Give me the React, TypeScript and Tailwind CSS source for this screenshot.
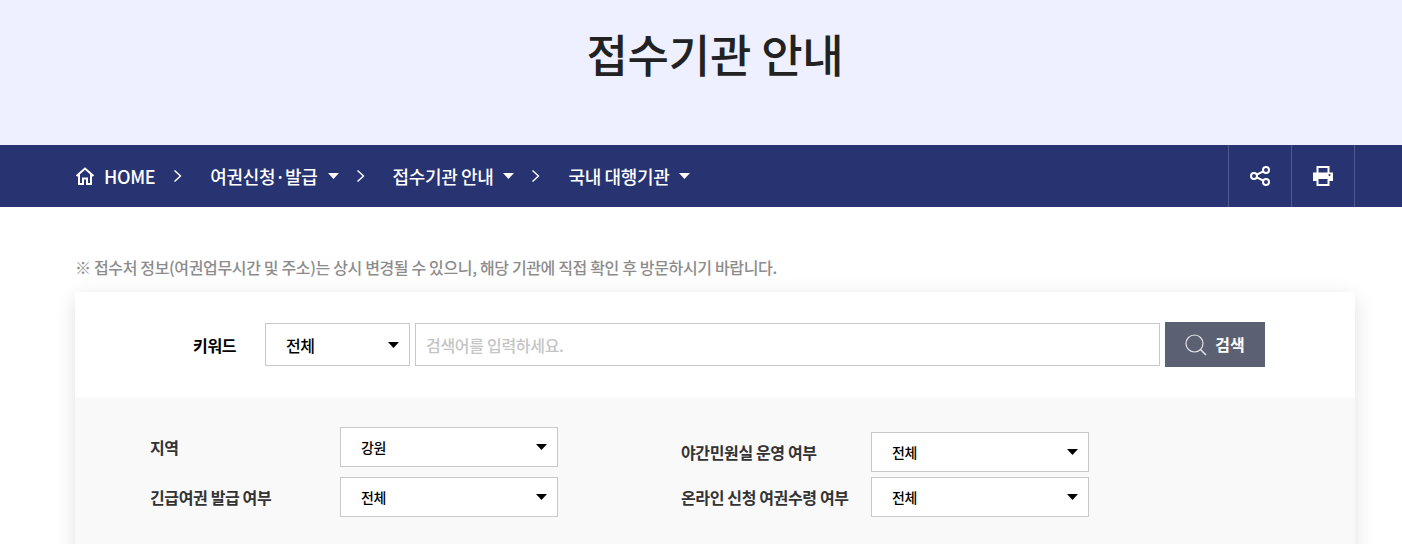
import React from "react";

const font = { fontFamily: '"Noto Sans CJK KR", "Noto Sans", sans-serif' };

function Caret({ className = "" }: { className?: string }) {
  return (
    <svg width="11" height="6" viewBox="0 0 11 6" className={className}>
      <path d="M0 0H11L5.5 6Z" fill="currentColor" />
    </svg>
  );
}

function Chevron() {
  return (
    <svg width="9" height="14" viewBox="0 0 9 14" fill="none" stroke="white" strokeWidth="1.4" className="shrink-0">
      <path d="M1.5 1.5L7.5 7L1.5 12.5" />
    </svg>
  );
}

function Select({ value, className }: { value: string; className: string }) {
  return (
    <div className={`flex items-center justify-between border border-[#c8c8c8] bg-white pl-[20px] pr-[10px] text-black font-medium ${className}`}>
      <span>{value}</span>
      <Caret />
    </div>
  );
}

function Field({ label, value }: { label: string; value: string }) {
  return (
    <div className="flex items-center">
      <span className="w-[190px] text-[16px] font-semibold text-[#333] tracking-[-0.37px]">{label}</span>
      <Select value={value} className="w-[218px] h-[40px] text-[14px] tracking-[-0.5px]" />
    </div>
  );
}

export default function App() {
  return (
    <div className="h-[544px] overflow-hidden bg-white" style={font}>
      <div className="w-[1430px]">
        <div className="h-[145px] bg-[#eef0ff] pt-[21px] text-center text-[45px] leading-[65px] font-medium text-[#222] tracking-[-0.2px]">
          접수기관 안내
        </div>

        <nav className="h-[62px] bg-[#283371] text-white">
          <div className="mx-auto flex h-full w-[1280px] items-center justify-between">
            <div className="flex items-center text-[18px] font-medium tracking-[-0.35px]">
              <svg width="20" height="20" viewBox="0 0 20 20" fill="none" stroke="white" strokeWidth="2" className="mr-[9px]">
                <path d="M1.5 10L10 2.500L18.500 10M4 8V18H8V12.500H12V18H16V8" />
              </svg>
              <span>HOME</span>
              <span className="ml-[18px] mr-[28px]"><Chevron /></span>
              <span>여권신청·발급</span>
              <Caret className="ml-[10px]" />
              <span className="ml-[17px] mr-[28px]"><Chevron /></span>
              <span>접수기관 안내</span>
              <Caret className="ml-[10px]" />
              <span className="ml-[17px] mr-[28px]"><Chevron /></span>
              <span>국내 대행기관</span>
              <Caret className="ml-[10px]" />
            </div>
            <div className="flex h-full border-l border-[#4f5990]">
              <div className="flex w-[63px] items-center justify-center border-r border-[#4f5990]">
                <svg width="22" height="22" viewBox="0 0 22 22" fill="none" stroke="white" strokeWidth="2">
                  <circle cx="5" cy="11" r="3" />
                  <circle cx="17" cy="5" r="3" />
                  <circle cx="17" cy="17" r="3" />
                  <path d="M7.800 9.600L14.300 6.400M7.800 12.400L14.300 15.600" />
                </svg>
              </div>
              <div className="flex w-[63px] items-center justify-center border-r border-[#4f5990]">
                <svg width="20" height="20" viewBox="0 0 20 20">
                  <path fill="white" fillRule="evenodd" d="M3.500 0H16.500V6.500H20V15H16.500V20H3.500V15H0V6.500H3.500ZM5.500 2V6.500H14.500V2ZM5.500 13V18H14.500V13ZM16.500 8A1 1 0 1 0 16.501 8Z" />
                </svg>
              </div>
            </div>
          </div>
        </nav>

        <main className="mx-auto w-[1280px]">
          <p className="mt-[48px] h-[24px] text-[16px] leading-[24px] font-medium text-[#8c8c8c] tracking-[-0.35px]">
            ※ 접수처 정보(여권업무시간 및 주소)는 상시 변경될 수 있으니, 해당 기관에 직접 확인 후 방문하시기 바랍니다.
          </p>
          <section className="mt-[13px] bg-white shadow-[0_5px_20px_rgba(0,0,0,0.12)]">
            <div className="flex h-[105px] items-center pl-[118px]">
              <span className="w-[72px] text-[16px] font-bold text-black tracking-[-0.3px]">키워드</span>
              <Select value="전체" className="w-[145px] h-[43px] text-[16px] tracking-[-0.5px]" />
              <div className="ml-[5px] flex h-[43px] w-[745px] items-center border border-[#c8c8c8] px-[10px] text-[16px] font-medium tracking-[-0.3px] text-[#c4c4c4]">
                검색어를 입력하세요.
              </div>
              <button className="ml-[5px] flex h-[45px] w-[100px] items-center justify-center gap-[8px] bg-[#5b6073] text-[16px] font-bold text-white">
                <svg width="22" height="22" viewBox="0 0 22 22" fill="none" stroke="#e4e4e8" strokeWidth="1.2">
                  <circle cx="9.500" cy="9.500" r="8.500" />
                  <path d="M15.500 15.500L21 21" strokeWidth="1.500" />
                </svg>
                <span className="-translate-y-px">검색</span>
              </button>
            </div>
            <div className="flex h-[200px] items-start bg-[#f9f9f9] pl-[75px] pt-[30px]">
              <div className="flex w-[531px] flex-col gap-[10px]">
                <Field label="지역" value="강원" />
                <Field label="긴급여권 발급 여부" value="전체" />
              </div>
              <div className="mt-[5px] flex flex-col gap-[5px]">
                <Field label="야간민원실 운영 여부" value="전체" />
                <Field label="온라인 신청 여권수령 여부" value="전체" />
              </div>
            </div>
          </section>
        </main>
      </div>
    </div>
  );
}
